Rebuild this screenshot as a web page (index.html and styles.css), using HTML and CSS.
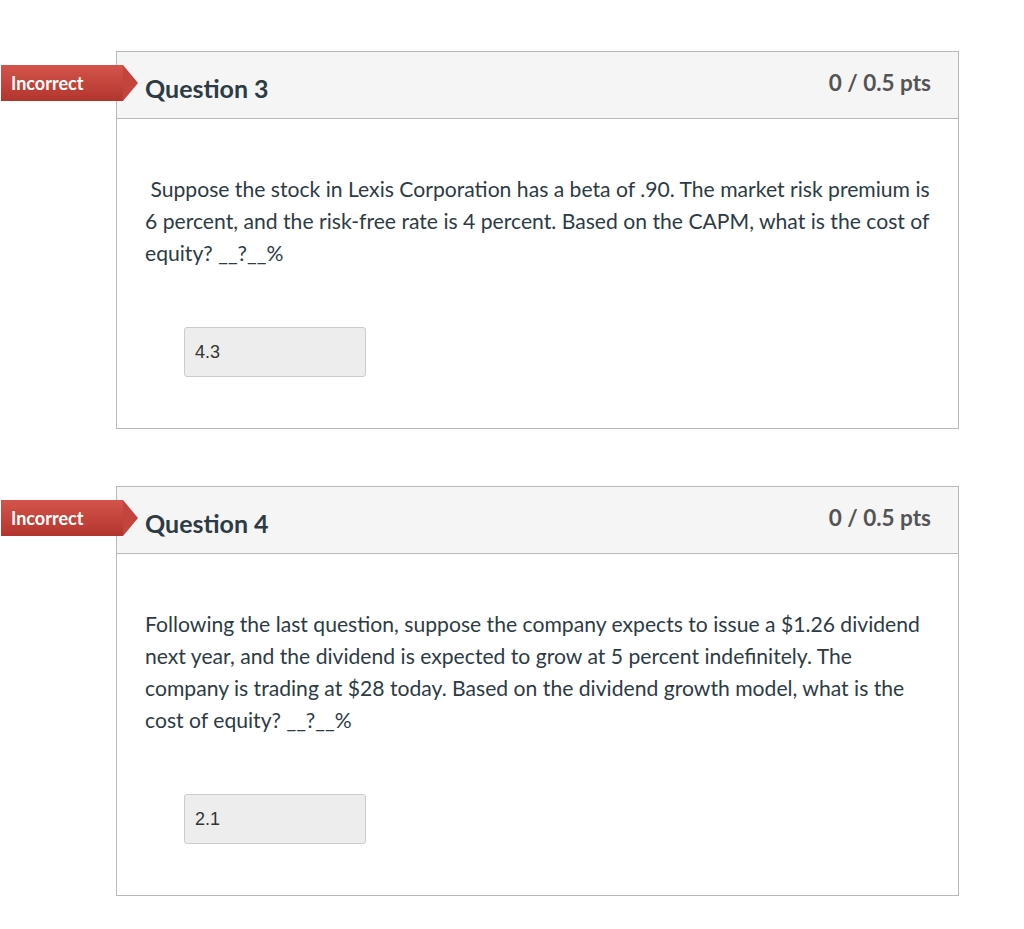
FILE: index.html
```html
<!DOCTYPE html>
<html lang="en">
<head>
<meta charset="utf-8">
<title>Quiz results</title>
<link rel="stylesheet" href="styles.css">
</head>
<body>
<div class="quiz">
  <div class="question">
    <div class="badge">Incorrect</div>
    <div class="q-header">
      <h2 class="q-title">Question 3</h2>
      <span class="q-points">0 / 0.5 pts</span>
    </div>
    <div class="q-body">
      <p class="q-text">&nbsp;Suppose the stock in Lexis Corporation has a beta of .90. The market risk premium is 6 percent, and the risk-free rate is 4 percent. Based on the CAPM, what is the cost of equity? __?__%</p>
      <div class="answer">4.3</div>
    </div>
  </div>
  <div class="question">
    <div class="badge">Incorrect</div>
    <div class="q-header">
      <h2 class="q-title">Question 4</h2>
      <span class="q-points">0 / 0.5 pts</span>
    </div>
    <div class="q-body">
      <p class="q-text">Following the last question, suppose the company expects to issue a $1.26 dividend next year, and the dividend is expected to grow at 5 percent indefinitely. The company is trading at $28 today. Based on the dividend growth model, what is the cost of equity? __?__%</p>
      <div class="answer">2.1</div>
    </div>
  </div>
</div>
</body>
</html>
```

FILE: styles.css
```css
html, body {
  margin: 0;
  padding: 0;
  background: #ffffff;
}

body {
  font-family: Lato, "Open Sans", sans-serif;
  color: #2d3b45;
}

.quiz {
  padding: 51px 0 0 116px;
  width: 843px;
  display: flex;
  flex-direction: column;
  gap: 57px;
}

.question {
  position: relative;
  border: 1px solid #b9b9b9;
  background: #ffffff;
}

.badge {
  position: absolute;
  left: -116px;
  top: 13px;
  height: 36px;
  width: 122px;
  padding-left: 10px;
  box-sizing: border-box;
  display: flex;
  align-items: center;
  color: #ffffff;
  font-weight: 700;
  font-size: 18px;
  white-space: nowrap;
  background: linear-gradient(#d4544b, #b2352d);
}

.badge::after {
  content: "";
  position: absolute;
  right: -15px;
  top: 0;
  border-top: 18px solid transparent;
  border-bottom: 18px solid transparent;
  border-left: 15px solid #c3443c;
}

.q-header {
  box-sizing: border-box;
  height: 67px;
  background: #f5f5f5;
  border-bottom: 1px solid #b9b9b9;
  display: flex;
  align-items: center;
  justify-content: space-between;
  padding: 0 27px 0 28px;
}

.q-title {
  margin: 6px 0 0 0;
  font-size: 25px;
  font-weight: 700;
  color: #2d3b45;
}

.q-points {
  margin-bottom: 5px;
  font-size: 22.5px;
  font-weight: 700;
  color: #545454;
}

.q-body {
  padding: 54px 28px 51px 28px;
}

.q-text {
  margin: 0;
  font-size: 21.15px;
  line-height: 32px;
  color: #2d3b45;
}

.answer {
  margin: 58px 0 0 39px;
  width: 182px;
  height: 50px;
  box-sizing: border-box;
  background: #ededed;
  border: 1px solid #cccccc;
  border-radius: 3px;
  padding-left: 10px;
  display: flex;
  align-items: center;
  font-family: "Liberation Sans", Arial, sans-serif;
  font-size: 18px;
  color: #333333;
}
```
